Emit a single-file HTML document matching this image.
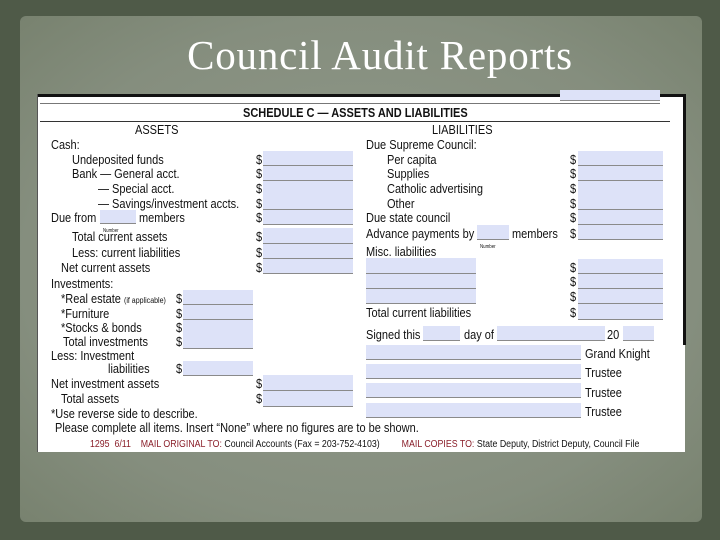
<!DOCTYPE html>
<html><head><meta charset="utf-8"><style>
*{margin:0;padding:0}
body{width:720px;height:540px;overflow:hidden;background:#4f5a48;position:relative;font-family:"Liberation Sans",sans-serif}
.in{position:absolute;left:20px;top:16px;width:682px;height:506px;background:radial-gradient(ellipse at 50% 50%,#939b8c 0%,#858e7e 70%,#78826f 100%);border-radius:6px}
.title{position:absolute;left:0;width:760px;top:31px;text-align:center;font-family:"Liberation Serif",serif;font-size:41px;color:#fff;letter-spacing:0.8px}
.p{position:absolute;left:37px;top:94px;width:648px;height:358px;background:#fff}
.t{position:absolute;font-size:12.5px;color:#111;white-space:nowrap;transform:scaleX(.88);transform-origin:0 0;line-height:14px}
.b{position:absolute;background:#dde2f8;border-bottom:1px solid #8a8a8a}
.r{color:#8a1f2a}
</style></head><body>
<div class="in"></div>
<div class="title">Council Audit Reports</div>
<div class="p"></div>
<div style="position:absolute;left:37px;top:94px;width:648px;height:3px;background:#111"></div>
<div style="position:absolute;left:683px;top:94px;width:3px;height:251px;background:#111"></div>
<div style="position:absolute;left:37px;top:94px;width:1px;height:358px;background:#555"></div>
<div class="b" style="left:560px;top:90px;width:100px;height:10px"></div>
<div style="position:absolute;left:40px;top:103px;width:620px;height:1px;background:#777"></div>
<div style="position:absolute;left:40px;top:121px;width:630px;height:1px;background:#333"></div>
<div class="t" style="left:243px;top:106px;font-weight:bold">SCHEDULE C — ASSETS AND LIABILITIES</div>
<div class="t" style="left:135px;top:123px">ASSETS</div>
<div class="t" style="left:432px;top:123px">LIABILITIES</div>
<div class="t" style="left:51px;top:138px">Cash:</div>
<div class="t" style="left:72px;top:153px">Undeposited funds</div>
<div class="t" style="left:72px;top:167px">Bank — General acct.</div>
<div class="t" style="left:98px;top:182px">— Special acct.</div>
<div class="t" style="left:98px;top:197px">— Savings/investment accts.</div>
<div class="t" style="left:51px;top:211px">Due from</div>
<div class="b" style="left:100px;top:210px;width:36px;height:13px"></div>
<div class="t" style="left:139px;top:211px">members</div>
<div class="t" style="left:103px;top:224px;font-size:5px">Number</div>
<div class="t" style="left:72px;top:230px">Total current assets</div>
<div class="t" style="left:72px;top:246px">Less: current liabilities</div>
<div class="t" style="left:61px;top:261px">Net current assets</div>
<div class="t" style="left:51px;top:277px">Investments:</div>
<div class="t" style="left:61px;top:292px">*Real estate <span style="font-size:8px">(if applicable)</span></div>
<div class="t" style="left:61px;top:307px">*Furniture</div>
<div class="t" style="left:61px;top:321px">*Stocks &amp; bonds</div>
<div class="t" style="left:63px;top:335px">Total investments</div>
<div class="t" style="left:51px;top:349px">Less: Investment</div>
<div class="t" style="left:108px;top:362px">liabilities</div>
<div class="t" style="left:51px;top:377px">Net investment assets</div>
<div class="t" style="left:61px;top:392px">Total assets</div>
<div class="t" style="left:51px;top:407px">*Use reverse side to describe.</div>
<div class="t" style="left:55px;top:421px">Please complete all items. Insert “None” where no figures are to be shown.</div>
<div class="t" style="left:90px;top:438px;font-size:10px"><span class="r">1295 &nbsp;6/11 &nbsp;&nbsp;&nbsp;MAIL ORIGINAL TO:</span> Council Accounts (Fax = 203-752-4103) &nbsp;&nbsp;&nbsp;&nbsp;&nbsp;&nbsp;&nbsp;&nbsp;<span class="r">MAIL COPIES TO:</span> State Deputy, District Deputy, Council File</div>

<div class="t" style="left:256px;top:153px">$</div><div class="b" style="left:263px;top:151px;width:90px;height:14px"></div>
<div class="t" style="left:256px;top:167px">$</div><div class="b" style="left:263px;top:166px;width:90px;height:14px"></div>
<div class="t" style="left:256px;top:182px">$</div><div class="b" style="left:263px;top:181px;width:90px;height:14px"></div>
<div class="t" style="left:256px;top:197px">$</div><div class="b" style="left:263px;top:195px;width:90px;height:14px"></div>
<div class="t" style="left:256px;top:211px">$</div><div class="b" style="left:263px;top:210px;width:90px;height:14px"></div>
<div class="t" style="left:256px;top:230px">$</div><div class="b" style="left:263px;top:228px;width:90px;height:15px"></div>
<div class="t" style="left:256px;top:246px">$</div><div class="b" style="left:263px;top:244px;width:90px;height:14px"></div>
<div class="t" style="left:256px;top:261px">$</div><div class="b" style="left:263px;top:259px;width:90px;height:14px"></div>
<div class="t" style="left:176px;top:292px">$</div><div class="b" style="left:183px;top:290px;width:70px;height:14px"></div>
<div class="t" style="left:176px;top:307px">$</div><div class="b" style="left:183px;top:305px;width:70px;height:14px"></div>
<div class="t" style="left:176px;top:321px">$</div><div class="b" style="left:183px;top:320px;width:70px;height:14px"></div>
<div class="t" style="left:176px;top:335px">$</div><div class="b" style="left:183px;top:334px;width:70px;height:14px"></div>
<div class="t" style="left:176px;top:362px">$</div><div class="b" style="left:183px;top:361px;width:70px;height:14px"></div>
<div class="t" style="left:256px;top:377px">$</div><div class="b" style="left:263px;top:375px;width:90px;height:15px"></div>
<div class="t" style="left:256px;top:392px">$</div><div class="b" style="left:263px;top:391px;width:90px;height:15px"></div>

<div class="t" style="left:366px;top:138px">Due Supreme Council:</div>
<div class="t" style="left:387px;top:153px">Per capita</div>
<div class="t" style="left:387px;top:167px">Supplies</div>
<div class="t" style="left:387px;top:182px">Catholic advertising</div>
<div class="t" style="left:387px;top:197px">Other</div>
<div class="t" style="left:366px;top:211px">Due state council</div>
<div class="t" style="left:366px;top:227px">Advance payments by</div>
<div class="b" style="left:477px;top:225px;width:32px;height:14px"></div>
<div class="t" style="left:480px;top:240px;font-size:5px">Number</div>
<div class="t" style="left:512px;top:227px">members</div>
<div class="t" style="left:366px;top:245px">Misc. liabilities</div>
<div class="t" style="left:570px;top:153px">$</div><div class="b" style="left:578px;top:151px;width:85px;height:14px"></div>
<div class="t" style="left:570px;top:167px">$</div><div class="b" style="left:578px;top:166px;width:85px;height:14px"></div>
<div class="t" style="left:570px;top:182px">$</div><div class="b" style="left:578px;top:181px;width:85px;height:14px"></div>
<div class="t" style="left:570px;top:197px">$</div><div class="b" style="left:578px;top:195px;width:85px;height:14px"></div>
<div class="t" style="left:570px;top:211px">$</div><div class="b" style="left:578px;top:210px;width:85px;height:14px"></div>
<div class="t" style="left:570px;top:227px">$</div><div class="b" style="left:578px;top:225px;width:85px;height:14px"></div>
<div class="t" style="left:570px;top:261px">$</div><div class="b" style="left:578px;top:259px;width:85px;height:14px"></div>
<div class="t" style="left:570px;top:275px">$</div><div class="b" style="left:578px;top:274px;width:85px;height:14px"></div>
<div class="t" style="left:570px;top:290px">$</div><div class="b" style="left:578px;top:289px;width:85px;height:14px"></div>
<div class="t" style="left:570px;top:306px">$</div><div class="b" style="left:578px;top:304px;width:85px;height:15px"></div>
<div class="b" style="left:366px;top:258px;width:110px;height:15px"></div>
<div class="b" style="left:366px;top:274px;width:110px;height:14px"></div>
<div class="b" style="left:366px;top:289px;width:110px;height:14px"></div>
<div class="t" style="left:366px;top:306px">Total current liabilities</div>
<div class="t" style="left:366px;top:328px">Signed this</div>
<div class="b" style="left:423px;top:326px;width:37px;height:14px"></div>
<div class="t" style="left:464px;top:328px">day of</div>
<div class="b" style="left:497px;top:326px;width:108px;height:14px"></div>
<div class="t" style="left:607px;top:328px">20</div>
<div class="b" style="left:623px;top:326px;width:31px;height:14px"></div>
<div class="b" style="left:366px;top:345px;width:215px;height:14px"></div>
<div class="t" style="left:585px;top:347px">Grand Knight</div>
<div class="b" style="left:366px;top:364px;width:215px;height:14px"></div>
<div class="t" style="left:585px;top:366px">Trustee</div>
<div class="b" style="left:366px;top:383px;width:215px;height:14px"></div>
<div class="t" style="left:585px;top:386px">Trustee</div>
<div class="b" style="left:366px;top:403px;width:215px;height:14px"></div>
<div class="t" style="left:585px;top:405px">Trustee</div>
</body></html>
